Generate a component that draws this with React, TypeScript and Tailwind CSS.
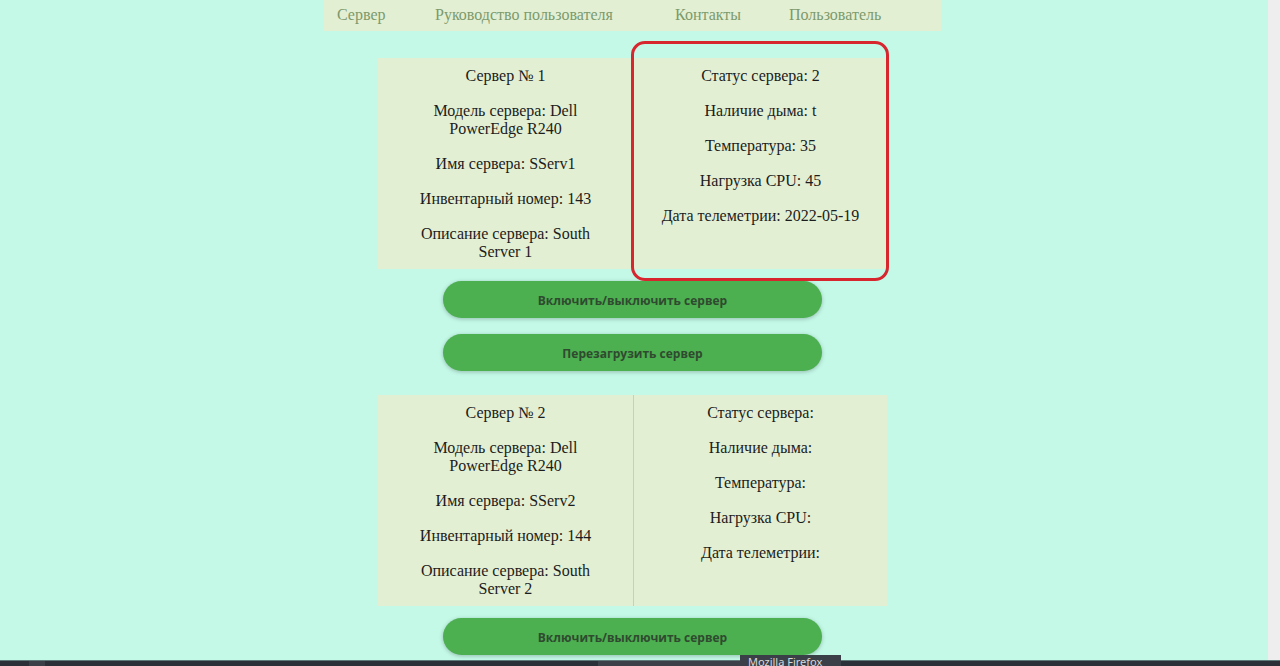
const serif = { fontFamily: '"Liberation Serif", "DejaVu Serif", serif' }

type Server = {
  num: number
  name: string
  inv: number
  desc: string
  status: string
  smoke: string
  temp: string
  cpu: string
  date: string
}

const servers: Server[] = [
  { num: 1, name: "SServ1", inv: 143, desc: "Server 1", status: " 2", smoke: " t", temp: " 35", cpu: " 45", date: " 2022-05-19" },
  { num: 2, name: "SServ2", inv: 144, desc: "Server 2", status: "", smoke: "", temp: "", cpu: "", date: "" },
]

function Btn({ children }: { children: React.ReactNode }) {
  return (
    <button
      className="flex h-[37px] w-[379px] items-center justify-center rounded-full bg-[#4caf50] pt-[2px] text-[12px] font-bold text-[#2f4a2f] shadow-[0_1px_4px_rgba(0,0,0,0.25)]"
      style={{ fontFamily: '"Open Sans", "Noto Sans", sans-serif' }}
    >
      {children}
    </button>
  )
}

function Card({ s, marked }: { s: Server; marked?: boolean }) {
  return (
    <div className="relative flex w-[509px] bg-[#e3efd3] text-[16px] leading-[18px] text-[#1c1c1c]" style={serif}>
      <div className="flex w-[255px] flex-col items-center gap-[17px] pt-[9px] pb-[8px] text-center">
        <p>Сервер № {s.num}</p>
        <p>
          Модель сервера: Dell
          <br />
          PowerEdge R240
        </p>
        <p>Имя сервера: {s.name}</p>
        <p>Инвентарный номер: {s.inv}</p>
        <p>
          Описание сервера: South
          <br />
          {s.desc}
        </p>
      </div>
      <div className="w-px bg-[#c9cfbb]" />
      <div className="flex flex-1 flex-col items-center gap-[17px] pt-[9px] text-center">
        <p>Статус сервера:{s.status}</p>
        <p>Наличие дыма:{s.smoke}</p>
        <p>Температура:{s.temp}</p>
        <p>Нагрузка CPU:{s.cpu}</p>
        <p>Дата телеметрии:{s.date}</p>
      </div>
      {marked && (
        <div className="pointer-events-none absolute -top-[17px] -bottom-[12px] left-[253px] right-[-2px] rounded-[14px] border-[3px] border-[#d8262e]" />
      )}
    </div>
  )
}

export default function App() {
  return (
    <div className="flex h-[666px] w-[1280px] flex-col overflow-hidden bg-[#c4f9e8]">
      <div className="flex h-[660px] overflow-hidden">
        <div className="flex w-[1265px] flex-col items-center">
          {/* nav */}
          <nav
            className="flex h-[31px] w-[617px] shrink-0 items-center bg-[#e3efd3] pl-[13px] pb-[2px] text-[16px] text-[#7c9a6c]"
            style={serif}
          >
            <span className="w-[98px]">Сервер</span>
            <span className="w-[240px]">Руководство пользователя</span>
            <span className="w-[114px]">Контакты</span>
            <span>Пользователь</span>
          </nav>

          <div className="mt-[27px] flex flex-col items-center">
            <Card s={servers[0]} marked />
            <div className="mt-[12px]">
              <Btn>Включить/выключить сервер</Btn>
            </div>
            <div className="mt-[16px]">
              <Btn>Перезагрузить сервер</Btn>
            </div>
            <div className="mt-[24px]">
              <Card s={servers[1]} />
            </div>
            <div className="mt-[12px]">
              <Btn>Включить/выключить сервер</Btn>
            </div>
          </div>
        </div>
        <div className="ml-auto w-[12px] bg-[#eeeeee]" />
      </div>

      {/* taskbar */}
      <div className="relative flex h-[6px] shrink-0 border-t border-[#5d7a78] bg-[#2b2f37]">
        <div className="ml-[29px] w-[16px] bg-[#3a3f48]" />
        <div className="ml-[553px] w-[142px] bg-[#3b4049]" />
        <div
          className="absolute bottom-0 left-[740px] h-[11px] w-[101px] overflow-hidden bg-[#3b3f47] pl-[8px] text-[11px] leading-[14px] text-[#d8d8d8]"
          style={{ fontFamily: '"Noto Sans", sans-serif' }}
        >
          Mozilla Firefox
        </div>
      </div>
    </div>
  )
}
